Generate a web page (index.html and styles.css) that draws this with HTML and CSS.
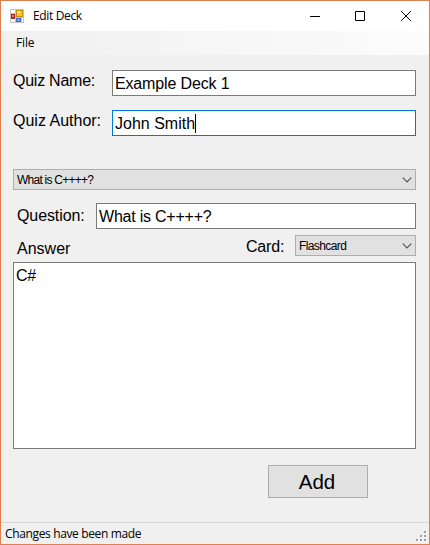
FILE: index.html
```html
<!DOCTYPE html>
<html lang="en">
<head>
<meta charset="utf-8">
<title>Edit Deck</title>
<link rel="stylesheet" href="styles.css">
</head>
<body>
<div class="window">
  <header class="titlebar">
    <svg class="app-icon" width="14" height="14" viewBox="0 0 14 14" shape-rendering="crispEdges">
      <rect width="14" height="14" fill="#c3c3c3"/>
      <path fill="#fff" d="M1 1h4v3H1zM1 10h4v3H1zM12 9h1v4h-1z"/>
      <rect x="1" y="5" width="4" height="5" fill="#a92822"/>
      <rect x="2" y="6" width="2" height="2" fill="#e0756c"/>
      <rect x="6" y="1" width="7" height="7" fill="#c98a08"/>
      <rect x="7" y="2" width="5" height="5" fill="#fbc72f"/>
      <rect x="7" y="2" width="3" height="2" fill="#ffe389"/>
      <rect x="6" y="9" width="5" height="4" fill="#3971d2"/>
      <rect x="7" y="10" width="3" height="2" fill="#6ba2f4"/>
    </svg>
    <span class="title">Edit Deck</span>
    <div class="controls">
      <svg width="10" height="10" viewBox="0 0 10 10"><path d="M0 5.5h10"/></svg>
      <svg width="10" height="10" viewBox="0 0 10 10"><path d="M.5.5h9v9h-9z"/></svg>
      <svg class="close" width="10" height="10" viewBox="0 0 10 10"><path d="M.2.2l9.6 9.6M9.8.2L.2 9.8"/></svg>
    </div>
  </header>
  <nav class="menubar"><span class="menu-item">File</span></nav>
  <main class="form">
    <div class="row">
      <span class="label quiz-label name-label">Quiz Name:</span>
      <div class="field"><span class="name-value">Example Deck 1</span></div>
    </div>
    <div class="row author">
      <span class="label quiz-label author-label">Quiz Author:</span>
      <div class="field focused"><span class="author-value">John Smith</span><i class="caret"></i></div>
    </div>
    <div class="combo deck-combo">
      <span class="combo-question">What is C++++?</span>
      <svg width="10" height="6" viewBox="0 0 10 6"><path d="M.8.7L5 4.9 9.2.7"/></svg>
    </div>
    <div class="row question">
      <span class="label question-label">Question:</span>
      <div class="field"><span class="question-value">What is C++++?</span></div>
    </div>
    <div class="row answer-row">
      <span class="label answer-label">Answer</span>
      <span class="label card-label">Card:</span>
      <div class="combo card-combo">
        <span class="combo-card">Flashcard</span>
        <svg width="10" height="6" viewBox="0 0 10 6"><path d="M.8.7L5 4.9 9.2.7"/></svg>
      </div>
    </div>
    <div class="answer-box">C#</div>
    <div class="add-button"><span>Add</span></div>
  </main>
  <footer class="statusbar">
    <span class="status">Changes have been made</span>
    <svg class="grip" width="11" height="11" viewBox="0 0 11 11" shape-rendering="crispEdges">
      <path fill="#fff" d="M9 1h2v2H9zM5 5h2v2H5zM9 5h2v2H9zM1 9h2v2H1zM5 9h2v2H5zM9 9h2v2H9z"/>
      <path fill="#9f9f9f" d="M8 0h2v2H8zM4 4h2v2H4zM8 4h2v2H8zM0 8h2v2H0zM4 8h2v2H4zM8 8h2v2H8z"/>
    </svg>
  </footer>
</div>
</body>
</html>
```
FILE: styles.css
```css
* { box-sizing: border-box; }

body {
  margin: 0;
  font-family: "Liberation Sans", Arial, sans-serif;
  color: #000;
}

.window {
  width: 430px;
  height: 545px;
  display: flex;
  flex-direction: column;
  border: 1px solid #df7f4e;
  background: #f0f0f0;
  white-space: nowrap;
  overflow: hidden;
}

svg { display: block; flex: none; }

.titlebar {
  height: 30px;
  flex: none;
  display: flex;
  align-items: center;
  padding: 0 18px 0 9px;
  background: #fff;
}

.title {
  margin-left: 9px;
  font: 12px/16px "Open Sans", sans-serif;
  letter-spacing: -0.35px;
}

.controls {
  margin-left: auto;
  display: flex;
  gap: 35px;
}

.close { margin-left: 1px; }

.controls path { fill: none; stroke: #000; stroke-width: 1; }

.menubar {
  height: 24px;
  flex: none;
  padding: 4px 15px;
  background: linear-gradient(90deg, #f0f0f0, #fcfcfc);
}

.menu-item {
  display: block;
  font: 12px/16px "Open Sans", sans-serif;
  letter-spacing: -0.15px;
}

.form {
  flex: 1;
  display: flex;
  flex-direction: column;
  padding: 15px 13px 0 12px;
}

.row { display: flex; height: 26px; flex: none; }
.author { margin-top: 14px; }

.label { flex: none; font-size: 16px; line-height: 20px; }
.quiz-label { width: 99px; padding-top: 1px; }
.name-label { letter-spacing: -0.25px; }
.question-label { width: 83px; padding: 3px 0 0 4px; letter-spacing: -0.1px; }

.field {
  flex: 1;
  display: flex;
  align-items: center;
  border: 1px solid #7a7a7a;
  background: #fff;
  padding: 1px 2px 0;
  font-size: 16px;
}

.name-value { letter-spacing: -0.15px; }
.question-value { letter-spacing: -0.22px; }

.focused { border-color: #0078d7; }
.caret { width: 1px; height: 19px; background: #000; }

.combo {
  height: 21px;
  flex: none;
  display: flex;
  align-items: center;
  justify-content: space-between;
  padding: 0 3px;
  border: 1px solid #adadad;
  background: #e1e1e1;
  font-size: 12px;
}

.combo-question { letter-spacing: -0.75px; }
.combo-card { letter-spacing: -0.6px; }

.combo path { fill: none; stroke: #555; stroke-width: 1.2; }
.deck-combo { margin-top: 33px; }

.question { margin-top: 13px; }

.answer-row { height: 21px; margin-top: 6px; }
.answer-label { padding: 4px 0 0 4px; }
.card-label {
  margin-left: auto;
  width: 49px;
  padding-top: 2px;
  letter-spacing: -0.2px;
}
.card-combo { width: 121px; }

.answer-box {
  height: 187px;
  flex: none;
  margin-top: 6px;
  padding: 3px 2px;
  border: 1px solid #7a7a7a;
  background: #fff;
  font-size: 16px;
  line-height: 20px;
  letter-spacing: -0.3px;
}

.add-button {
  width: 100px;
  height: 33px;
  margin: 16px 0 0 255px;
  padding: 1px 2px 0 0;
  display: flex;
  align-items: center;
  justify-content: center;
  border: 1px solid #adadad;
  background: #e1e1e1;
  font-size: 20.5px;
}

.statusbar {
  height: 22px;
  flex: none;
  display: flex;
  justify-content: space-between;
  padding: 3px 2px 0 4px;
  border-top: 1px solid #d7d7d7;
}

.status { font: 12px/16px "Open Sans", sans-serif; letter-spacing: -0.36px; }
.grip { margin-top: 5px; }
```
